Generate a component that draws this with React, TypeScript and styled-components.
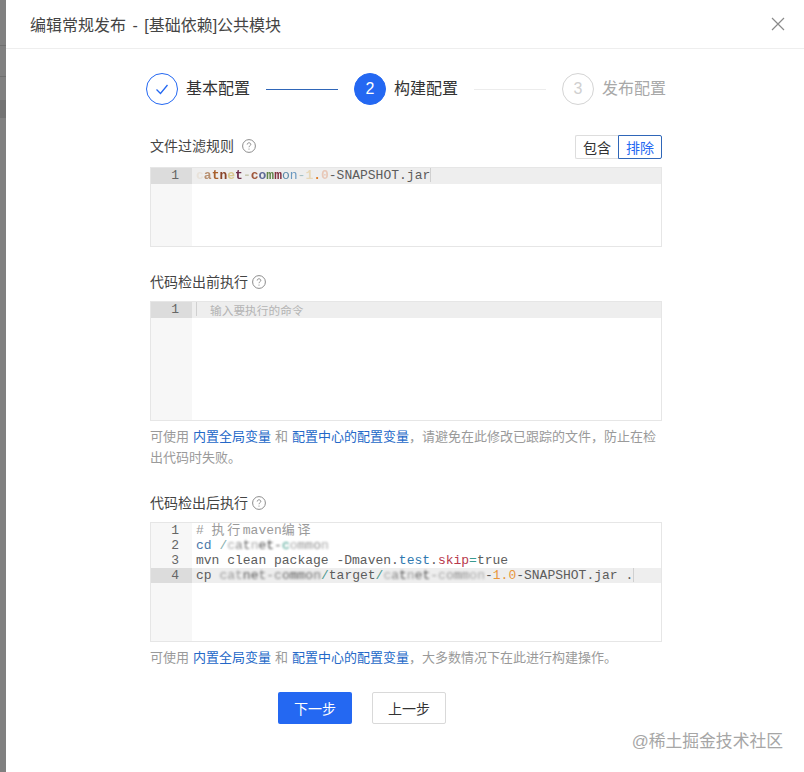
import React from "react";
import styled, { createGlobalStyle } from "styled-components";

const Global = createGlobalStyle`
  html, body { margin: 0; padding: 0; background: #fff; }
  body { font-family: "Liberation Sans", "Noto Sans CJK SC", sans-serif; color: #333; }
`;

const Page = styled.div`
  display: flex;
  width: 804px;
  height: 772px;
  overflow: hidden;
  position: relative;
`;
const Backdrop = styled.div`
  width: 6px;
  flex: none;
  background: linear-gradient(
    #808080 0 45px, #6f6f6f 45px 46px, #808080 46px 76px, #6f6f6f 76px 77px, #808080 77px 100px,
    #737373 100px 118px, #808080 118px
  );
`;
const Modal = styled.div`
  flex: 1;
  display: flex;
  flex-direction: column;
  min-width: 0;
`;
const Header = styled.header`
  height: 48px;
  flex: none;
  display: flex;
  align-items: center;
  justify-content: space-between;
  padding: 0 19px 0 24px;
  border-bottom: 1px solid #eeeeee;
`;
const Title = styled.h1`
  margin: 0;
  font-size: 16px;
  font-weight: 400;
  word-spacing: 2px;
  color: #444;
`;
const Close = styled.button`
  border: 0;
  background: none;
  padding: 0;
  width: 14px;
  height: 14px;
  display: flex;
  color: #8a8a8a;
`;
const Steps = styled.ol`
  list-style: none;
  margin: 24px 0 0;
  padding: 0 0 0 140px;
  display: flex;
  align-items: center;
  height: 32px;
`;
const Step = styled.li`
  display: flex;
  align-items: center;
  gap: 8px;
`;
const Circle = styled.span<{ $state: "done" | "active" | "todo" }>`
  width: 32px;
  height: 32px;
  box-sizing: border-box;
  border-radius: 50%;
  display: flex;
  align-items: center;
  justify-content: center;
  font-size: 16px;
  border: 1px solid ${(p) => (p.$state === "todo" ? "#d4d4d4" : "#2468f2")};
  background: ${(p) => (p.$state === "active" ? "#2468f2" : "#fff")};
  color: ${(p) => (p.$state === "active" ? "#fff" : p.$state === "done" ? "#2468f2" : "#d0d0d0")};
`;
const StepLabel = styled.span<{ $muted?: boolean }>`
  font-size: 16px;
  line-height: 24px;
  color: ${(p) => (p.$muted ? "#a8a8a8" : "#333")};
`;
const Connector = styled.span<{ $on?: boolean }>`
  width: 72px;
  height: 1px;
  margin: 0 16px;
  background: ${(p) => (p.$on ? "#2f66b8" : "#ececec")};
`;
const Content = styled.main`
  width: 512px;
  margin: 30px 0 0 144px;
  display: flex;
  flex-direction: column;
`;
const Section = styled.section`
  display: flex;
  flex-direction: column;
  & + & { margin-top: 25px; }
`;
const SectionHead = styled.div<{ $tall?: boolean }>`
  display: flex;
  align-items: flex-start;
  height: ${(p) => (p.$tall ? "24px" : "20px")};
  margin-bottom: ${(p) => (p.$tall ? "8px" : "9px")};
`;
const LabelGroup = styled.div<{ $tall?: boolean }>`
  display: flex;
  align-items: center;
  height: ${(p) => (p.$tall ? "22px" : "20px")};
`;
const Label = styled.span`
  font-size: 14px;
  line-height: 20px;
  color: #444;
`;
const HelpIcon = styled.span<{ $gap: number }>`
  display: flex;
  margin-left: ${(p) => p.$gap}px;
  color: #8c8c8c;
`;
const Toggle = styled.div`
  margin-left: auto;
  display: flex;
`;
const ToggleBtn = styled.button<{ $on?: boolean }>`
  width: ${(p) => (p.$on ? "44px" : "43px")};
  height: 24px;
  padding: 0;
  box-sizing: border-box;
  font: 14px "Liberation Sans", "Noto Sans CJK SC", sans-serif;
  background: #fff;
  color: ${(p) => (p.$on ? "#2468f2" : "#333")};
  border: 1px solid ${(p) => (p.$on ? "#2f66b8" : "#dddddd")};
  border-right-width: ${(p) => (p.$on ? "1px" : "0")};
  border-radius: ${(p) => (p.$on ? "0 2px 2px 0" : "2px 0 0 2px")};
`;
const Editor = styled.div<{ $h: number; $lh: number }>`
  height: ${(p) => p.$h}px;
  box-sizing: border-box;
  border: 1px solid #e6e6e6;
  display: grid;
  grid-template-columns: 41px 1fr;
  grid-auto-rows: ${(p) => p.$lh}px;
  background: linear-gradient(90deg, #f7f7f7 41px, #fff 41px);
  align-content: start;
  font: 13px/${(p) => p.$lh}px "Liberation Mono", "Noto Sans CJK SC", monospace;
  color: #5c5c5c;
  overflow: hidden;
`;
const LineNo = styled.div<{ $active?: boolean }>`
  text-align: right;
  padding-right: 13px;
  color: #666;
  background: ${(p) => (p.$active ? "#dcdcdc" : "transparent")};
`;
const Line = styled.div<{ $active?: boolean }>`
  padding-left: 4px;
  white-space: pre;
  background: ${(p) => (p.$active ? "#eeeeee" : "transparent")};
`;
const Placeholder = styled.span`
  font: 11.7px/15px "Noto Sans CJK SC", sans-serif;
  color: #b4b4b4;
  margin-left: 13px;
`;
const Caret = styled.span`
  display: inline-block;
  width: 1px;
  height: 14px;
  vertical-align: top;
  background: #d0d0d0;
`;
const Tok = styled.span<{ $c: string }>`
  color: ${(p) => p.$c};
`;
const WideCjk = styled.span`
  letter-spacing: 2.6px;
`;
const MosaicText = styled.span<{ $blur: number; $bold?: boolean }>`
  filter: blur(${(p) => p.$blur}px);
  font-weight: ${(p) => (p.$bold ? 700 : 400)};
`;
const Hint = styled.p`
  margin: 6px 0 0;
  font-size: 13px;
  line-height: 20.5px;
  color: #9a9a9a;
`;
const HintLink = styled.a`
  color: #2468c8;
  margin: 0 4px;
`;
const HintLinkEnd = styled.a`
  color: #2468c8;
  margin-left: 4px;
`;
const Footer = styled.div`
  margin: 23.5px 0 0 128px;
  display: flex;
  gap: 20px;
`;
const Primary = styled.button`
  width: 74px;
  height: 32px;
  padding: 0;
  border: 0;
  border-radius: 2px;
  background: #2468f2;
  color: #fff;
  font: 14px "Noto Sans CJK SC", sans-serif;
`;
const Secondary = styled.button`
  width: 74px;
  height: 32px;
  padding: 0;
  box-sizing: border-box;
  border: 1px solid #d9d9d9;
  border-radius: 2px;
  background: #fff;
  color: #333;
  font: 14px "Noto Sans CJK SC", sans-serif;
`;
const Watermark = styled.span`
  position: absolute;
  right: 21px;
  top: 730px;
  font-size: 16.8px;
  line-height: 24px;
  color: #a6a6a6;
`;

const Help = ({ gap }: { gap: number }) => (
  <HelpIcon $gap={gap}>
    <svg width="14" height="14" viewBox="0 0 14 14" fill="none" stroke="currentColor">
      <circle cx="7" cy="7" r="6.4" />
      <path d="M5.2 5.5c0-1 .8-1.7 1.8-1.7s1.8.7 1.8 1.6c0 1.3-1.8 1.4-1.8 2.8" />
      <path d="M7 9.6v1" />
    </svg>
  </HelpIcon>
);

const Mosaic = ({ text, colors, blur = 0.6, bold }: { text: string; colors: string[]; blur?: number; bold?: boolean }) => (
  <MosaicText $blur={blur} $bold={bold}>
    {text.split("").map((ch, i) => (
      <Tok key={i} $c={colors[i % colors.length]}>
        {ch}
      </Tok>
    ))}
  </MosaicText>
);

export default function App() {
  return (
    <Page>
      <Global />
      <Backdrop />
      <Modal>
        <Header>
          <Title>编辑常规发布 - [基础依赖]公共模块</Title>
          <Close aria-label="关闭">
            <svg width="14" height="14" viewBox="0 0 14 14" stroke="currentColor" strokeWidth="1.2">
              <path d="M1 1l12 12M13 1L1 13" />
            </svg>
          </Close>
        </Header>
        <Steps>
          <Step>
            <Circle $state="done">
              <svg width="16" height="16" viewBox="0 0 16 16" fill="none" stroke="currentColor" strokeWidth="1.3">
                <path d="M2.5 8.5l4 4 7-8.5" />
              </svg>
            </Circle>
            <StepLabel>基本配置</StepLabel>
          </Step>
          <Connector $on />
          <Step>
            <Circle $state="active">2</Circle>
            <StepLabel>构建配置</StepLabel>
          </Step>
          <Connector />
          <Step>
            <Circle $state="todo">3</Circle>
            <StepLabel $muted>发布配置</StepLabel>
          </Step>
        </Steps>
        <Content>
          <Section>
            <SectionHead $tall>
              <LabelGroup $tall>
                <Label>文件过滤规则</Label>
                <Help gap={8} />
              </LabelGroup>
              <Toggle>
                <ToggleBtn>包含</ToggleBtn>
                <ToggleBtn $on>排除</ToggleBtn>
              </Toggle>
            </SectionHead>
            <Editor $h={80} $lh={16}>
              <LineNo $active>1</LineNo>
              <Line $active>
                <Mosaic
                  text="catnet-comm"
                  blur={0.7}
                  bold
                  colors={["#e8e2da", "#b89070", "#a8602c", "#8a4428", "#d8c890", "#70304a", "#c8c8b0", "#a0583c", "#606c98", "#5f8448", "#80303f"]}
                />
                <Mosaic text="on" blur={0.5} colors={["#5a88a8", "#6a98c0"]} />
                <Tok $c="#a8c0c0">-</Tok>
                <Mosaic text="1.0" blur={0.5} bold colors={["#e8d8b8", "#e07a20", "#e8c8b8"]} />
                -SNAPSHOT.jar
                <Caret />
              </Line>
            </Editor>
          </Section>
          <Section>
            <SectionHead>
              <LabelGroup>
                <Label>代码检出前执行</Label>
                <Help gap={4} />
              </LabelGroup>
            </SectionHead>
            <Editor $h={120} $lh={16}>
              <LineNo $active>1</LineNo>
              <Line $active>
                <Caret />
                <Placeholder>输入要执行的命令</Placeholder>
              </Line>
            </Editor>
            <Hint>
              可使用<HintLink>内置全局变量</HintLink>和<HintLinkEnd>配置中心的配置变量</HintLinkEnd>，请避免在此修改已跟踪的文件，防止在检出代码时失败。
            </Hint>
          </Section>
          <Section>
            <SectionHead>
              <LabelGroup>
                <Label>代码检出后执行</Label>
                <Help gap={4} />
              </LabelGroup>
            </SectionHead>
            <Editor $h={120} $lh={15}>
              <LineNo>1</LineNo>
              <Line>
                <Tok $c="#9a9a9a">
                  # <WideCjk>执行</WideCjk>maven<WideCjk>编译</WideCjk>
                </Tok>
              </Line>
              <LineNo>2</LineNo>
              <Line>
                <Tok $c="#4a78a8">cd</Tok> <Tok $c="#8ab0b0">/</Tok>
                <Mosaic
                  text="catnet-common"
                  blur={0.8}
                  colors={["#aaa", "#888", "#666", "#aaa", "#555", "#444", "#555", "#3a9a88", "#aaa", "#999", "#999", "#888", "#aaa"]}
                />
              </Line>
              <LineNo>3</LineNo>
              <Line>
                mvn clean package -Dmaven.<Tok $c="#2f78b0">test</Tok>.<Tok $c="#b8384c">skip</Tok>
                <Tok $c="#3a9a90">=</Tok>true
              </Line>
              <LineNo $active>4</LineNo>
              <Line $active>
                cp <Mosaic text="catnet-common" blur={0.8} colors={["#999", "#999", "#999", "#555", "#555", "#777", "#888", "#888", "#666", "#555", "#666", "#666", "#777"]} />
                <Tok $c="#4f9a90">/</Tok>target<Tok $c="#4f9a90">/</Tok>
                <Mosaic text="catnet-common" blur={0.9} colors={["#aaa", "#888", "#555", "#999", "#666", "#555", "#999", "#aaa", "#999", "#888", "#999", "#aaa", "#aaa"]} />
                -<Tok $c="#e8963c">1.0</Tok>-SNAPSHOT.jar .
                <Caret />
              </Line>
            </Editor>
            <Hint>
              可使用<HintLink>内置全局变量</HintLink>和<HintLinkEnd>配置中心的配置变量</HintLinkEnd>，大多数情况下在此进行构建操作。
            </Hint>
          </Section>
          <Footer>
            <Primary>下一步</Primary>
            <Secondary>上一步</Secondary>
          </Footer>
        </Content>
      </Modal>
      <Watermark>@稀土掘金技术社区</Watermark>
    </Page>
  );
}
